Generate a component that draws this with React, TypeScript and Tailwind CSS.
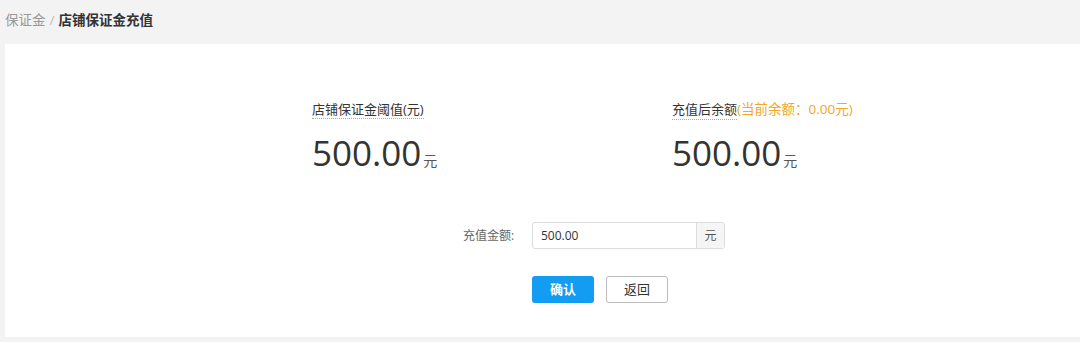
import React from "react";

const font = { fontFamily: '"Open Sans", "Noto Sans CJK SC", sans-serif' };

export default function App() {
  return (
    <div className="w-[1080px] h-[342px] bg-[#f3f3f3] overflow-hidden" style={font}>
      <div className="h-[44px] flex items-center pl-[5px] text-[13.5px] leading-none pb-[3px]">
        <span className="text-[#999]">保证金</span>
        <span className="text-[#bbb] mx-[4px]">/</span>
        <span className="text-[#333] font-bold">店铺保证金充值</span>
      </div>
      <div className="ml-[5px] h-[293px] bg-white pt-[52px]">
        <div className="flex pl-[307px]">
          <div className="w-[360px]">
            <div className="inline-block text-[13px] leading-[16px] text-[#333] border-b border-dotted border-[#aaa] pb-[1px]">
              店铺保证金阈值(元)
            </div>
            <div className="mt-[11px] flex items-baseline text-[#333]">
              <span className="text-[35px] leading-[44px]">500.00</span>
              <span className="text-[14px] text-[#555] ml-[2px]">元</span>
            </div>
          </div>
          <div className="w-[360px]">
            <div className="inline-block text-[13px] leading-[16px] text-[#333]">
              <span className="border-b border-dotted border-[#aaa] pb-[1px]">充值后余额</span>
              <span className="text-[#f5a623] text-[13.5px]">(当前余额：0.00元)</span>
            </div>
            <div className="mt-[11px] flex items-baseline text-[#333]">
              <span className="text-[35px] leading-[44px]">500.00</span>
              <span className="text-[14px] text-[#555] ml-[2px]">元</span>
            </div>
          </div>
        </div>
        <div className="mt-[47px] flex items-center pl-[458px]">
          <span className="text-[12px] text-[#666] w-[69px]">充值金额:</span>
          <div className="flex h-[27px] border border-[#ddd] rounded-[3px] overflow-hidden">
            <div className="w-[163px] flex items-center pl-[8px] text-[12px] text-[#333]">500.00</div>
            <div className="w-[28px] bg-[#f5f5f5] border-l border-[#ddd] flex items-center justify-center text-[12px] text-[#555]">元</div>
          </div>
        </div>
        <div className="mt-[27px] flex pl-[527px] gap-[12px]">
          <button className="w-[62px] h-[27px] rounded-[3px] bg-[#129df3] text-white text-[13px] font-bold">确认</button>
          <button className="w-[62px] h-[27px] rounded-[3px] bg-white border border-[#bbb] text-[#333] text-[13px]">返回</button>
        </div>
      </div>
    </div>
  );
}
